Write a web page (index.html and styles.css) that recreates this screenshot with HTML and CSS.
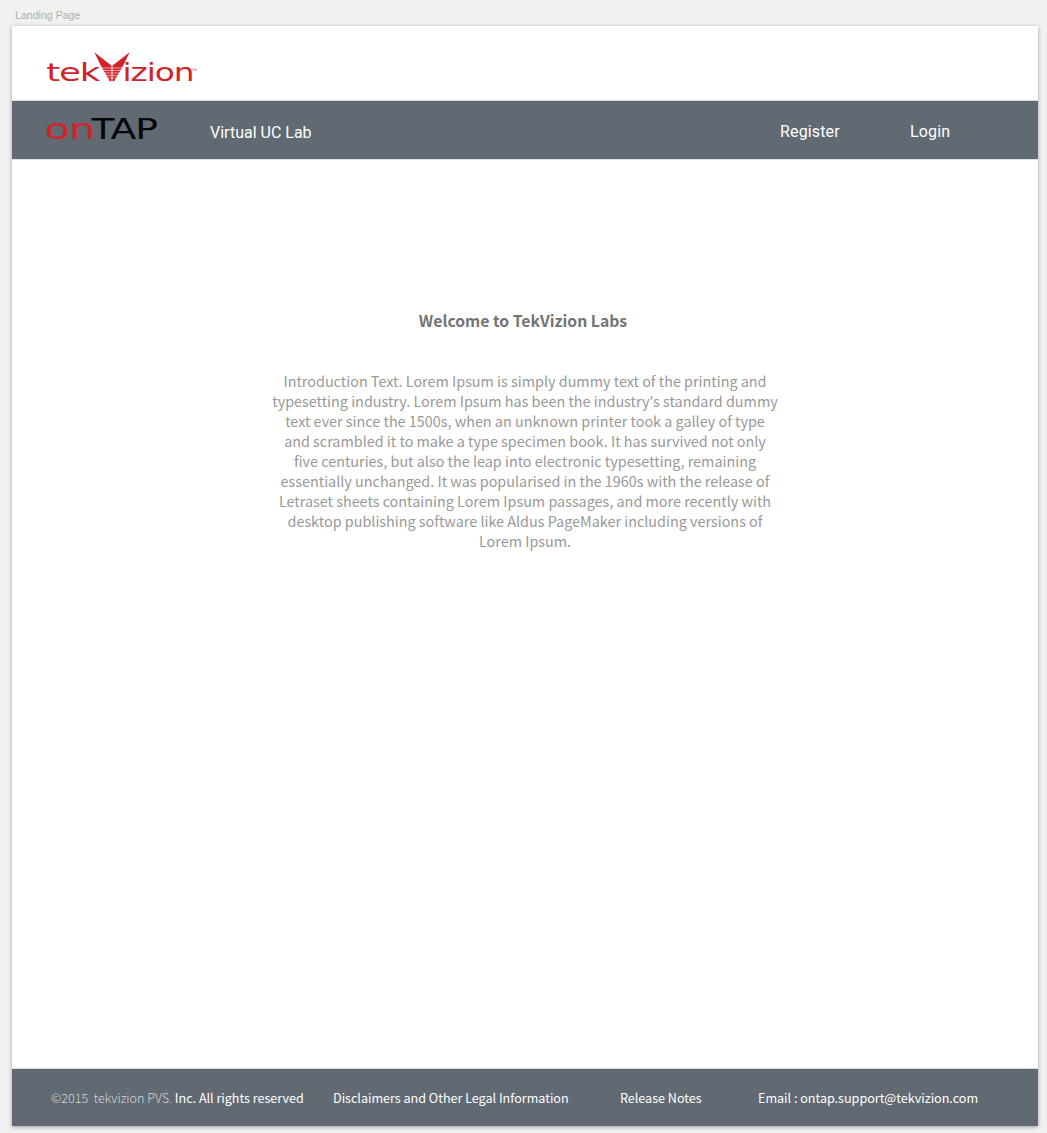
FILE: index.html
```html
<!DOCTYPE html>
<html lang="en">
<head>
<meta charset="utf-8">
<title>Landing Page</title>
<link rel="stylesheet" href="styles.css">
</head>
<body>
<div class="label">Landing Page</div>
<div class="page">
  <header class="brand">
    <svg class="brand-logo" width="160" height="40" viewBox="-4 -2 160 40" role="img" aria-label="tekVizion">
      <g class="logo-text" fill="#d2232a">
        <text x="-.8" y="29" font-size="24.4" textLength="53" lengthAdjust="spacingAndGlyphs">tek</text>
        <text x="75.500" y="29" font-size="24.4" textLength="71" lengthAdjust="spacingAndGlyphs">izion</text>
        <text class="mark" x="145" y="18.500" font-size="3.500" textLength="5" lengthAdjust="spacingAndGlyphs">TM</text>
      </g>
      <path fill="#d2232a" d="M47.300 .3 64.800 13.800V29.300H62.800L54.300 14.500ZM82.700 .3 65.200 13.800V29.300H67.200L75.700 14.500Z"/>
      <path stroke="#fff" stroke-width=".7" stroke-opacity=".8" d="M53 16H77M53 18.500H77M55 21H75M56 23.500H74M57 26H73M65 13V30"/>
    </svg>
  </header>
  <nav class="nav">
    <svg class="nav-logo" width="122" height="36" viewBox="-4 -6 122 36" role="img" aria-label="onTAP">
      <g class="logo-text" font-size="28.800">
        <text x="-1.500" y="24.300" fill="#d2232a" textLength="50" lengthAdjust="spacingAndGlyphs">on</text>
        <text x="45.500" y="24.300" fill="#050505" textLength="65.500" lengthAdjust="spacingAndGlyphs">TAP</text>
      </g>
    </svg>
    <span class="nav-title">Virtual UC Lab</span>
    <a class="nav-link register">Register</a>
    <a class="nav-link login">Login</a>
  </nav>
  <main class="intro">
    <h1>Welcome to TekVizion Labs</h1>
    <p>Introduction Text. Lorem Ipsum is simply dummy text of the printing and<br>
    typesetting industry. Lorem Ipsum has been the industry's standard dummy<br>
    text ever since the 1500s, when an unknown printer took a galley of type<br>
    and scrambled it to make a type specimen book. It has survived not only<br>
    five centuries, but also the leap into electronic typesetting, remaining<br>
    essentially unchanged. It was popularised in the 1960s with the release of<br>
    Letraset sheets containing Lorem Ipsum passages, and more recently with<br>
    desktop publishing software like Aldus PageMaker including versions of<br>
    Lorem Ipsum.</p>
  </main>
  <footer class="footer">
    <span class="copyright"><span class="light">©2015&nbsp; tekvizion PVS.</span> Inc. All rights reserved</span>
    <a class="legal">Disclaimers and Other Legal Information</a>
    <a class="notes">Release Notes</a>
    <a class="email">Email : ontap.support@tekvizion.com</a>
  </footer>
</div>
</body>
</html>
```
FILE: styles.css
```css
* { box-sizing: border-box; }
body {
  margin: 0;
  height: 1133px;
  overflow: hidden;
  background: #f1f1f1;
  font-family: "Noto Sans CJK SC", "Noto Sans", sans-serif;
}
.label {
  height: 26px;
  padding: 9px 0 0 15px;
  font: 10.6px/13px "Liberation Sans", sans-serif;
  color: #acb0ad;
}
.page {
  display: flex;
  flex-direction: column;
  width: 1026px;
  height: 1100px;
  margin-left: 12px;
  background: #fff;
  box-shadow: 0 1px 4px rgba(0, 0, 0, .35);
}
.brand {
  height: 75px;
  padding: 24px 0 0 31px;
  border-bottom: 1px solid #d8dddb;
}
.brand-logo, .nav-logo { display: block; flex: none; overflow: visible; }
.logo-text { font-family: "DejaVu Sans", sans-serif; letter-spacing: -.8px; }
.mark { letter-spacing: 0; }
.nav {
  display: flex;
  align-items: flex-start;
  height: 59px;
  padding-left: 30px;
  background: #616973;
  border-bottom: 1px solid #e0e2e4;
  color: #fff;
  font: 16px/20px Roboto, sans-serif;
  white-space: nowrap;
}
.nav-logo { margin-top: 8px; }
.nav-title { flex: none; width: 570px; margin: 22px 0 0 46px; }
.nav-link { flex: none; margin-top: 21px; letter-spacing: .15px; }
.register { width: 130px; }
.intro {
  flex: 1;
  text-align: center;
  white-space: nowrap;
}
.intro h1 {
  margin: 148px 0 0;
  padding-right: 4px;
  font-size: 15.750px;
  line-height: 26px;
  font-weight: 700;
  color: #747474;
}
.intro p {
  margin: 37px 0 0;
  font-size: 14.380px;
  line-height: 20px;
  color: #999;
}
.footer {
  display: flex;
  height: 58px;
  padding: 19px 0 0 39px;
  background: #616973;
  border-top: 1px solid #d9dbdd;
  color: #fff;
  font-size: 12.600px;
  line-height: 20px;
  letter-spacing: -.02px;
  white-space: nowrap;
}
.copyright { width: 282px; }
.light { font-weight: 300; color: #d5d8db; }
.legal { width: 287px; }
.notes { width: 138px; }
```
